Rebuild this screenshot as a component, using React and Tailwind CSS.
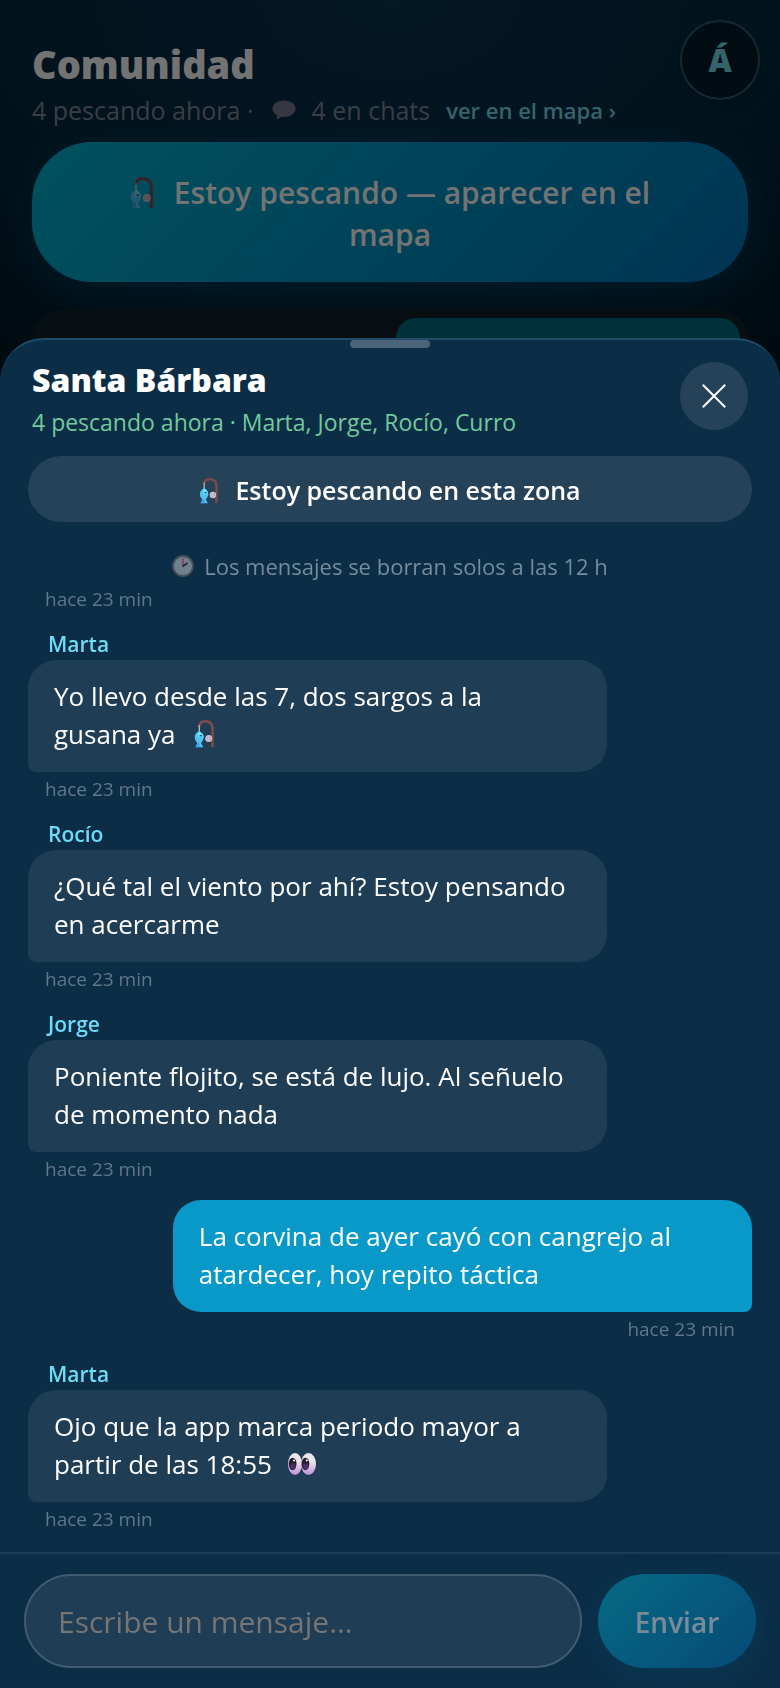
import { useState } from "react";

const MESSAGES = [
  { id: 1, time: "hace 23 min" },
  { id: 2, author: "Marta", text: "Yo llevo desde las 7, dos sargos a la gusana\u00a0ya", icon: "rod", time: "hace 23 min" },
  { id: 3, author: "Rocío", text: "¿Qué tal el viento por ahí? Estoy pensando en acercarme", time: "hace 23 min" },
  { id: 4, author: "Jorge", text: "Poniente flojito, se está de lujo. Al señuelo de momento nada", time: "hace 23 min" },
  { id: 5, mine: true, text: "La corvina de ayer cayó con cangrejo al atardecer, hoy repito táctica", time: "hace 23 min" },
  { id: 6, author: "Marta", text: "Ojo que la app marca periodo mayor a partir de las 18:55", icon: "eyes", time: "hace 23 min" },
];

const RodIcon = ({ className }) => (
  <svg viewBox="0 0 24 32" className={className} aria-hidden="true">
    <path d="M6 8C6 3.500 9 1.600 13 1.600c5.200 0 8.200 3 8.200 8V31" fill="none" stroke="#7d4a4c" strokeWidth="3" />
    <path d="M6 6v8" stroke="#d5d9e2" strokeWidth="1.200" />
    <path d="M6 12.500c3.200 1.500 5.200 4 5.200 7 0 3-1.600 5-3.200 6.800l2.500 4.700H1.500l2.300-4.700C2 24.500.8 22.500.8 19.500c0-3 2-5.500 5.200-7z" fill="#4dc4f5" />
    <path d="M6 13c3 1.500 4.800 4 4.800 6.500H5c-1-2-.5-4.500 1-6.500z" fill="#6fe6f2" />
    <path d="M1.200 21.500 4 26.500 2 31h3.500l1-4c-2.500-1-4-3-5.300-5.500z" fill="#3b9df8" />
    <path d="M6.500 18h2.600" stroke="#3c3550" strokeWidth="1.400" />
    <circle cx="16.800" cy="21" r="4" fill="#cbbfd3" />
    <circle cx="16.800" cy="21" r="2" fill="none" stroke="#8f8299" strokeWidth="1" strokeDasharray="1.200 1.900" />
  </svg>
);

const EyesIcon = ({ className }) => (
  <svg viewBox="0 0 28 22" className={className} aria-hidden="true">
    <defs>
      <linearGradient id="eye" x1="0" y1="0" x2="0" y2="1">
        <stop offset="0.4" stopColor="#ebe5ee" />
        <stop offset="1" stopColor="#bf90d6" />
      </linearGradient>
    </defs>
    <ellipse cx="7" cy="11" rx="7" ry="11" fill="url(#eye)" />
    <ellipse cx="20.500" cy="11" rx="7.500" ry="11" fill="url(#eye)" />
    <ellipse cx="4.600" cy="11" rx="3.900" ry="6.200" fill="#2a1f30" />
    <ellipse cx="17.400" cy="11" rx="3.900" ry="6.200" fill="#2a1f30" />
    <ellipse cx="4.800" cy="13.500" rx="2.800" ry="3" fill="#4c2d66" />
    <ellipse cx="17.600" cy="13.500" rx="2.800" ry="3" fill="#4c2d66" />
    <circle cx="6" cy="7.500" r="1" fill="#fff" />
    <circle cx="18.800" cy="7.500" r="1" fill="#fff" />
  </svg>
);

const ClockIcon = ({ className }) => (
  <svg viewBox="0 0 22 22" className={className} aria-hidden="true">
    <circle cx="11" cy="11" r="10" fill="#717f8f" stroke="#434f5b" strokeWidth="1.800" />
    <path d="M11 3.500V11" stroke="#8b426b" strokeWidth="2" />
    <path d="m10.500 11.500 5-3.500" stroke="#1d2b3b" strokeWidth="1.600" />
  </svg>
);

const ChatIcon = ({ className }) => (
  <svg viewBox="0 0 24 20" className={className} aria-hidden="true">
    <path d="M12 .5c6.500 0 11.500 3.600 11.500 8.300S18.500 17 12 17c-.9 0-1.800-.1-2.600-.2L4.500 19.500l.6-4.300C2.300 13.700.5 11.500.5 8.800.5 4.100 5.500.5 12 .5z" fill="#797b92" />
  </svg>
);

const Message = ({ message }) => {
  const { author, text, icon, time, mine } = message;

  return (
    <li className={`flex shrink-0 flex-col ${mine ? "items-end" : "items-start"}`}>
      {author && (
        <span className="mb-0.5 ml-5 text-[21px] leading-7 font-semibold text-[#6edcf8]">{author}</span>
      )}
      {text && (
        <p
          className={`w-4/5 rounded-[28px] px-[26px] pt-[17px] pb-[19px] text-[26px] leading-[38px] text-white ${
            mine ? "rounded-br-lg bg-[#0999c9]" : "rounded-bl-lg bg-[#1f3d54]"
          }`}
        >
          {text}
          {icon === "rod" && <RodIcon className="ml-[18px] inline-block h-7 w-[21px] align-[-4px]" />}
          {icon === "eyes" && <EyesIcon className="ml-4 inline-block h-[22px] w-7 align-[-1px]" />}
        </p>
      )}
      <span className="mx-[17px] mt-1 text-[19px] leading-[26px] text-[#617789]">{time}</span>
    </li>
  );
};

const App = () => {
  const [draft, setDraft] = useState("");

  return (
    <div className="min-h-screen overflow-hidden bg-[radial-gradient(ellipse_700px_420px_at_50%_0%,#093350_0%,#042b40_50%,#001826_100%)] font-['Open_Sans','Noto_Sans',sans-serif] text-white">
      <header className="flex items-start justify-between pt-5 pr-5 pl-8">
        <div className="pt-[18px]">
          <h1 className="text-[38px] leading-[52px] font-extrabold">Comunidad</h1>
          <p className="mt-1 flex items-center text-[25px] leading-8 text-[#818b98]">
            4 pescando ahora ·
            <ChatIcon className="mr-4 ml-[18px] h-5 w-6" />
            4 en chats
            <a href="#mapa" className="ml-4 text-[22px] font-semibold text-[#76dbed]">
              ver en el mapa ›
            </a>
          </p>
        </div>
        <button
          aria-label="Perfil"
          className="size-20 shrink-0 rounded-full border-2 border-[#2c5a69] bg-[#001b28] text-[32px] font-extrabold text-[#76dbed] shadow-lg"
        >
          Á
        </button>
      </header>

      <main className="px-8 pt-4">
        <button className="flex w-full items-center justify-center rounded-[60px] bg-linear-[135deg,#00b5d0,#0074b8] px-24 pt-[30px] pb-[26px] text-center text-[30px] leading-[42px] font-semibold shadow-[0_8px_36px_rgba(0,130,190,0.3)]">
          <span>
            <RodIcon className="mr-5 inline-block h-8 w-6 align-[-5px]" />
            Estoy pescando — aparecer en el mapa
          </span>
        </button>
        <div className="mt-7 grid grid-cols-2 gap-3 rounded-[28px] bg-[#10222c] p-2">
          <div />
          <div className="h-20 rounded-[20px] bg-[#006b80]" />
        </div>
      </main>

      <div className="fixed inset-0 bg-black/55" />

      <section
        role="dialog"
        aria-label="Santa Bárbara"
        className="fixed inset-x-0 bottom-0 flex h-[80vh] flex-col rounded-t-[44px] border-t-2 border-[#1d4c68] bg-[#0b2d46]"
      >
        <div className="mx-auto h-2 w-20 shrink-0 rounded-full bg-[#4d6379]" />

        <div className="flex items-start justify-between px-8 pt-3.5">
          <div>
            <h2 className="text-[32px] leading-9 font-extrabold">Santa Bárbara</h2>
            <p className="mt-2.5 text-[23px] leading-7 text-[#73c99d]">
              4 pescando ahora · Marta, Jorge, Rocío, Curro
            </p>
          </div>
          <button
            aria-label="Cerrar"
            className="flex size-[68px] shrink-0 items-center justify-center rounded-full bg-[#254259]"
          >
            <svg viewBox="0 0 24 24" className="size-6" aria-hidden="true">
              <path d="M.8.8 23.200 23.200M23.200.8.8 23.200" stroke="#fff" strokeWidth="2" />
            </svg>
          </button>
        </div>

        <button className="mx-7 mt-5 flex h-[66px] shrink-0 items-center justify-center rounded-full bg-[#254259] pt-1 text-[25px] font-semibold">
          <RodIcon className="mr-4 h-[26px] w-5" />
          Estoy pescando en esta zona
        </button>

        <p className="mt-[30px] flex items-center justify-center text-[22px] leading-7 text-[#768c9b]">
          <ClockIcon className="mr-2.5 size-[22px]" />
          Los mensajes se borran solos a las 12 h
        </p>

        <ul className="mt-1 flex min-h-0 flex-1 flex-col justify-end gap-[18px] overflow-hidden px-7 pb-5">
          {MESSAGES.map((message) => (
            <Message key={message.id} message={message} />
          ))}
        </ul>

        <form
          onSubmit={(e) => e.preventDefault()}
          className="flex items-stretch gap-4 border-t-2 border-[#1d3d56] px-6 py-5"
        >
          <input
            type="text"
            aria-label="Mensaje"
            placeholder="Escribe un mensaje…"
            value={draft}
            onChange={(e) => setDraft(e.target.value)}
            className="h-[94px] min-w-0 flex-1 rounded-full border-2 border-[#415b70] bg-[#1f3d54] px-8 text-[30px] text-white placeholder:text-[#757575] focus:outline-none"
          />
          <button
            type="submit"
            className="w-[158px] shrink-0 rounded-full bg-linear-[135deg,#00b5d0,#0070b0] pt-0.5 text-[28px] font-semibold opacity-45 shadow-[0_8px_36px_rgba(0,130,190,0.3)]"
          >
            Enviar
          </button>
        </form>
      </section>
    </div>
  );
};

export default App;
